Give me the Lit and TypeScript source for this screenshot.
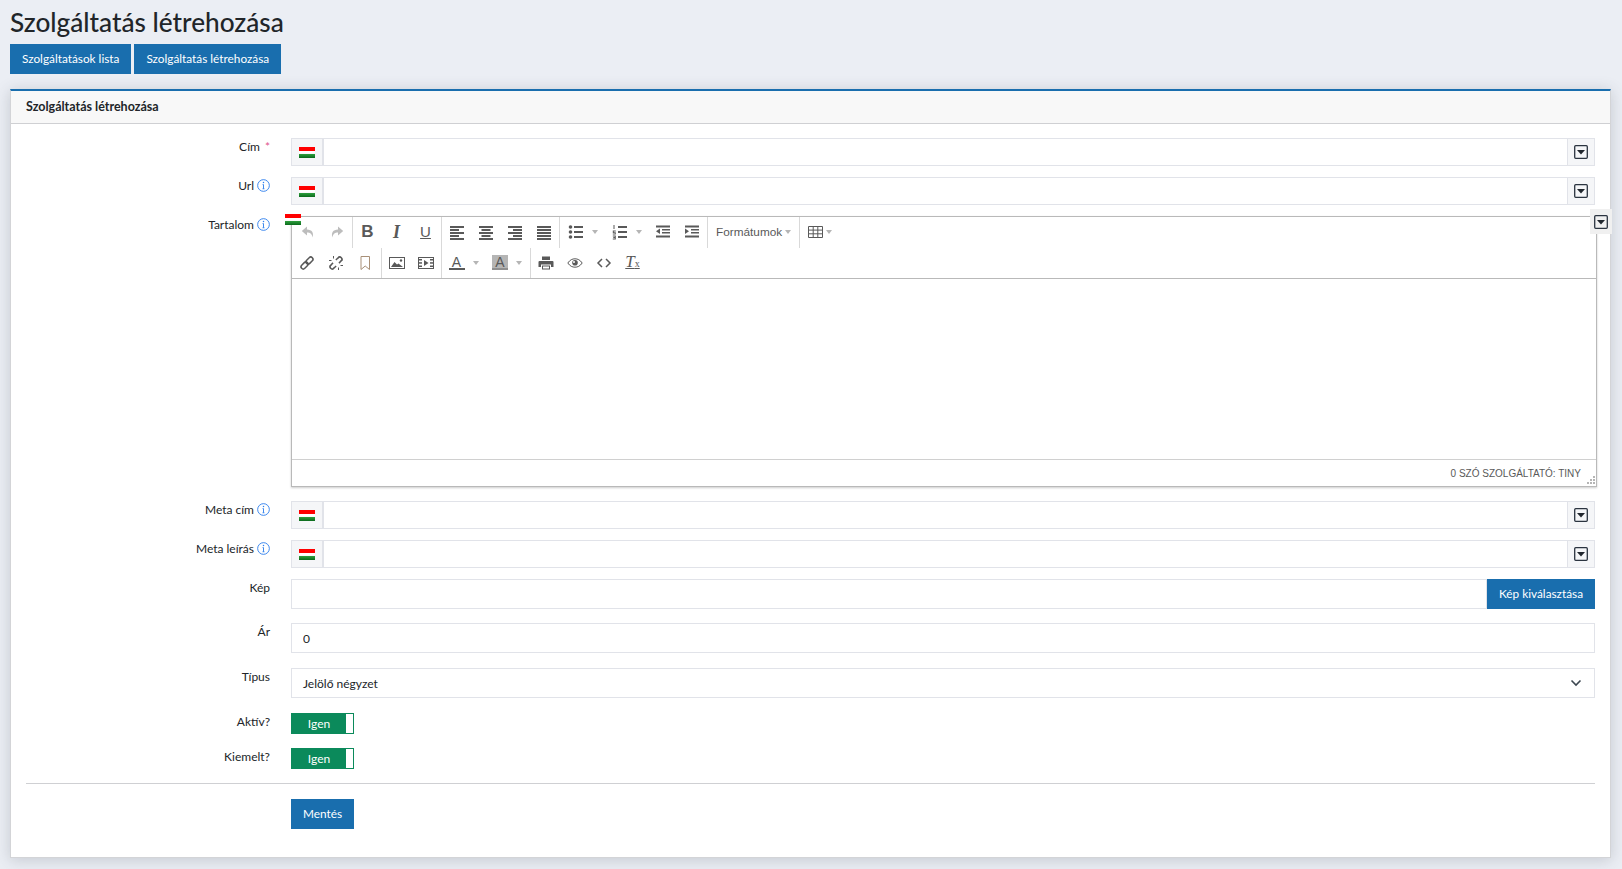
import { LitElement, css, html, svg } from 'lit'
import { customElement } from 'lit/decorators.js'

const bars = (rows: [number, number][]) =>
  rows.map(([x, w], i) => svg`<rect x=${x} y=${2 + i * 3} width=${w} height="2"></rect>`)

const icons: Record<string, unknown> = {
  undo: svg`<path class="off" d="M7 2.5 1.8 7 7 11.5V8.6c3 0 4.8 1 5.6 4.9C14 8.6 12 5.6 7 5.4Z"></path>`,
  redo: svg`<path class="off" d="M9 2.5 14.2 7 9 11.5V8.6c-3 0-4.8 1-5.6 4.9C2 8.6 4 5.6 9 5.4Z"></path>`,
  left: bars([[1, 14], [1, 9], [1, 14], [1, 9], [1, 14]]),
  center: bars([[1, 14], [3.5, 9], [1, 14], [3.5, 9], [1, 14]]),
  right: bars([[1, 14], [6, 9], [1, 14], [6, 9], [1, 14]]),
  justify: bars([[1, 14], [1, 14], [1, 14], [1, 14], [1, 14]]),
  bullist: svg`<circle cx="2.5" cy="3" r="1.8"></circle><circle cx="2.5" cy="8" r="1.8"></circle><circle cx="2.5" cy="13" r="1.8"></circle><rect x="6" y="2" width="9" height="2"></rect><rect x="6" y="7" width="9" height="2"></rect><rect x="6" y="12" width="9" height="2"></rect>`,
  numlist: svg`<rect x="1.5" y="1" width="1" height="4"></rect><path d="M.8 6.5h3v1h-2v.8h2v2.200h-3v-1h2v-.6h-2Z"></path><path d="M.8 11.500h3v4h-3v-1h2v-.5h-1.500v-1h1.500v-.5h-2Z"></path><rect x="6" y="2" width="9" height="2"></rect><rect x="6" y="7" width="9" height="2"></rect><rect x="6" y="12" width="9" height="2"></rect>`,
  outdent: svg`<rect x="1" y="1.500" width="14" height="2"></rect><rect x="7" y="5" width="8" height="1.500"></rect><rect x="7" y="8" width="8" height="1.500"></rect><rect x="1" y="11.500" width="14" height="2"></rect><path d="M5 4.500v5.500L1 7.300Z"></path>`,
  indent: svg`<rect x="1" y="1.500" width="14" height="2"></rect><rect x="7" y="5" width="8" height="1.500"></rect><rect x="7" y="8" width="8" height="1.500"></rect><rect x="1" y="11.500" width="14" height="2"></rect><path d="M1 4.500v5.500l4-2.700Z"></path>`,
  table: svg`<path class="line thin" d="M.5 2.500h14v11H.5ZM.5 6.100h14M.5 9.800h14M5.200 2.500v11M9.800 2.500v11"></path>`,
  link: svg`<g class="line" transform="rotate(-45 8 8)"><rect x="0.500" y="5.800" width="8" height="4.400" rx="2.200"></rect><rect x="7.500" y="5.800" width="8" height="4.400" rx="2.200"></rect></g>`,
  unlink: svg`<g class="line" transform="rotate(-45 8 8)"><path d="M6 5.800H2.700a2.200 2.200 0 0 0 0 4.400H6M10 5.800h3.300a2.200 2.200 0 0 1 0 4.400H10"></path></g><path class="line thin" d="M5.500 1v2.500M1 5.500h2.500M10.500 15v-2.500M15 10.500h-2.500M11 1.500l-.8 2M14.500 5l-2 .8M5 14.500l.8-2M1.500 11l2-.8"></path>`,
  bookmark: svg`<path class="line tan" d="M4 1.500h8.500v13L8.200 11 4 14.500Z"></path>`,
  image: svg`<rect class="line thin" x="0.500" y="2.500" width="15" height="11"></rect><path d="M2 12l3.500-5 2.500 2.500 1.500-1L14 12Z"></path><circle cx="12" cy="5.500" r="1.200"></circle>`,
  media: svg`<rect class="line thin" x="0.500" y="2.500" width="15" height="11"></rect><path d="M6 5v6l4.500-3Z"></path><rect x="1" y="4" width="3" height="1.500"></rect><rect x="1" y="7.200" width="3" height="1.500"></rect><rect x="1" y="10.500" width="3" height="1.500"></rect><rect x="12" y="4" width="3" height="1.500"></rect><rect x="12" y="7.200" width="3" height="1.500"></rect><rect x="12" y="10.500" width="3" height="1.500"></rect>`,
  print: svg`<path d="M4 1.500h8V5H4ZM1.500 6h13a1 1 0 0 1 1 1v5H13V9.500H3V12H.5V7a1 1 0 0 1 1-1ZM4 10.500h8v4H4Z"></path><rect x="5" y="11.500" width="6" height="2" fill="#fff"></rect>`,
  eye: svg`<path class="line thin" d="M.8 8C3 4.800 5.400 3.800 8 3.800S13 4.800 15.200 8C13 11.200 10.600 12.200 8 12.200S3 11.200.8 8Z"></path><circle cx="8" cy="7.800" r="2.800"></circle><circle cx="7" cy="7" r="1" fill="#fff"></circle>`,
  code: svg`<path class="line" d="M6 4 2 8l4 4M10 4l4 4-4 4"></path>`,
}

const tool = (name: string, split = false) => html`
  <span class="tool ${split ? 'split' : ''}">
    <svg class="ico" viewBox="0 0 16 16" width="16" height="16">${icons[name]}</svg>
    ${split ? html`<i class="caret"></i>` : ''}
  </span>
`

const letter = (text: string, cls: string) => html`<span class="tool"><span class="glyph ${cls}">${text}</span></span>`

const flag = (cls = '') => html`<span class="flag ${cls}"></span>`

const caretBox = html`
  <svg class="drop" viewBox="0 0 14 14" width="14" height="14">
    <rect x="0.700" y="0.700" width="12.600" height="12.600" rx="1"></rect>
    <path d="M3 5h8L7 9.500Z"></path>
  </svg>
`

const info = html`
  <svg class="info" viewBox="0 0 14 14" width="13" height="13">
    <circle cx="7" cy="7" r="6.300"></circle>
    <path d="M7 6v4.500M6 10.500h2M6 6h1"></path>
    <circle class="dot" cx="7" cy="3.800" r=".8"></circle>
  </svg>
`

@customElement('app-root')
export class AppRoot extends LitElement {
  private langInput() {
    return html`
      <div class="group">
        <span class="addon flag-addon">${flag()}</span>
        <input class="control" type="text" />
        <span class="addon drop-addon">${caretBox}</span>
      </div>
    `
  }

  private toolbar() {
    return html`
      <div class="toolbar">
        <div class="tool-row">
          <div class="tool-group">${tool('undo')}${tool('redo')}</div>
          <div class="tool-group">
            ${letter('B', 'bold')}${letter('I', 'italic')}${letter('U', 'under')}
          </div>
          <div class="tool-group">
            ${tool('left')}${tool('center')}${tool('right')}${tool('justify')}
          </div>
          <div class="tool-group">
            ${tool('bullist', true)}${tool('numlist', true)}${tool('outdent')}${tool('indent')}
          </div>
          <div class="tool-group formats"><span>Formátumok</span><i class="caret"></i></div>
          <div class="tool-group last"><span class="tool split narrow">
            <svg class="ico" viewBox="0 0 16 16" width="16" height="16">${icons.table}</svg><i class="caret"></i>
          </span></div>
        </div>
        <div class="tool-row second">
          <div class="tool-group">${tool('link')}${tool('unlink')}${tool('bookmark')}</div>
          <div class="tool-group">${tool('image')}${tool('media')}</div>
          <div class="tool-group">
            <span class="tool split tight"><span class="glyph color fore">A</span><i class="caret"></i></span>
            <span class="tool split tight"><span class="glyph color back">A</span><i class="caret"></i></span>
          </div>
          <div class="tool-group last">
            ${tool('print')}${tool('eye')}${tool('code')}
            <span class="tool"><span class="glyph clear">T<small>x</small></span></span>
          </div>
        </div>
      </div>
    `
  }

  render() {
    return html`
      <h1>Szolgáltatás létrehozása</h1>
      <nav>
        <a class="btn">Szolgáltatások lista</a>
        <a class="btn">Szolgáltatás létrehozása</a>
      </nav>
      <section class="card">
        <header>Szolgáltatás létrehozása</header>
        <form class="body">
          <div class="row">
            <label>Cím <b>*</b></label>
            ${this.langInput()}
          </div>
          <div class="row">
            <label>Url ${info}</label>
            ${this.langInput()}
          </div>
          <div class="row wide-gap">
            <label>Tartalom ${info}</label>
            <div class="editor-wrap">
              ${flag('over')}
              <span class="drop-over">${caretBox}</span>
              <div class="editor">
                ${this.toolbar()}
                <div class="edit-area"></div>
                <div class="status">
                  <span>0 szó Szolgáltató: Tiny</span>
                  <svg class="grip" viewBox="0 0 8 8" width="8" height="8">
                    <path d="M6 0h2v2H6ZM3 3h2v2H3ZM6 3h2v2H6ZM0 6h2v2H0ZM3 6h2v2H3ZM6 6h2v2H6Z"></path>
                  </svg>
                </div>
              </div>
            </div>
          </div>
          <div class="row">
            <label>Meta cím ${info}</label>
            ${this.langInput()}
          </div>
          <div class="row">
            <label>Meta leírás ${info}</label>
            ${this.langInput()}
          </div>
          <div class="row wide-gap">
            <label>Kép</label>
            <div class="group tall">
              <input class="control solo" type="text" />
              <a class="btn">Kép kiválasztása</a>
            </div>
          </div>
          <div class="row wider-gap">
            <label>Ár</label>
            <div class="group tall"><input class="control solo" type="text" value="0" /></div>
          </div>
          <div class="row wider-gap">
            <label>Típus</label>
            <div class="group tall select">
              <span>Jelölő négyzet</span>
              <svg viewBox="0 0 12 8" width="12" height="8"><path d="M1.500 1.500 6 6l4.500-4.500"></path></svg>
            </div>
          </div>
          <div class="row wide-gap">
            <label>Aktív?</label>
            <div class="toggle"><span>Igen</span><i></i></div>
          </div>
          <div class="row">
            <label>Kiemelt?</label>
            <div class="toggle"><span>Igen</span><i></i></div>
          </div>
          <hr />
          <div class="row">
            <span></span>
            <div><a class="btn">Mentés</a></div>
          </div>
        </form>
      </section>
    `
  }

  static styles = css`
    :host {
      display: block;
      height: 869px;
      overflow: hidden;
      box-sizing: border-box;
      padding: 0 11px 0 10px;
      background: #ebeef4;
      color: #212529;
      font-family: "Lato", sans-serif;
      font-size: 12px;
    }
    h1 {
      margin: 0;
      height: 44px;
      font-size: 26.200px;
      font-weight: 500;
      line-height: 44px;
    }
    nav {
      display: flex;
      gap: 3px;
      height: 45px;
    }
    .btn {
      display: inline-flex;
      align-items: center;
      height: 30px;
      box-sizing: border-box;
      padding: 0 12px 1px;
      background: #196eae;
      color: #fff;
      font-size: 11.800px;
      white-space: nowrap;
    }
    .card {
      height: 769px;
      box-sizing: border-box;
      background: #fff;
      border: 1px solid #d3d4d7;
      border-top: 2px solid #196eae;
      box-shadow: 0 2px 14px rgba(60, 70, 80, 0.22);
    }
    header {
      height: 33px;
      box-sizing: border-box;
      padding-left: 15px;
      line-height: 32px;
      font-size: 12.500px;
      font-weight: 700;
      background: #f8f8f8;
      border-bottom: 1px solid #cfd0d3;
    }
    .body {
      padding: 14px 15px 0;
    }
    .row {
      display: grid;
      grid-template-columns: 244px 1fr;
      column-gap: 21px;
      margin-bottom: 11px;
    }
    .row.wide-gap {
      margin-bottom: 14px;
    }
    .row.wider-gap {
      margin-bottom: 15px;
    }
    label {
      display: flex;
      justify-content: flex-end;
      align-items: center;
      gap: 3px;
      height: 16px;
      white-space: nowrap;
    }
    label b {
      margin-left: 2px;
      color: #e0558c;
      font-weight: 400;
    }
    .info {
      fill: none;
      stroke: #2f80ed;
      stroke-width: 1;
    }
    .info .dot {
      fill: #2f80ed;
      stroke: none;
    }
    .group {
      display: flex;
      height: 28px;
    }
    .group.tall {
      height: 30px;
    }
    .addon {
      display: flex;
      align-items: center;
      justify-content: center;
      box-sizing: border-box;
      background: #f5f6f8;
      border: 1px solid #e1e3e9;
    }
    .flag-addon {
      flex: 0 0 33px;
      border-right-width: 2px;
    }
    .drop-addon {
      flex: 0 0 28px;
      border-left: 1px solid #e1e3e9;
    }
    .control {
      flex: 1;
      min-width: 0;
      box-sizing: border-box;
      padding: 0 11px;
      border: 1px solid #e1e3e9;
      border-left: 0;
      border-right: 0;
      outline: none;
      color: inherit;
      font: inherit;
      background: #fff;
    }
    .control.solo {
      border-left: 1px solid #e1e3e9;
      border-right: 1px solid #e1e3e9;
    }
    .flag {
      display: block;
      width: 16px;
      height: 11px;
      background: linear-gradient(#f00 0 36%, #fff 36% 58%, #d8d8d8 66%, #2a9a3a 67%, #0b6a1c 100%);
    }
    .flag.over {
      position: absolute;
      top: -2px;
      left: -6px;
      z-index: 1;
    }
    .drop {
      fill: none;
      stroke: #2b3440;
      stroke-width: 1.300;
    }
    .drop path {
      fill: #20262d;
      stroke: none;
    }
    .drop-over {
      position: absolute;
      top: -7px;
      right: -15px;
      z-index: 1;
      display: flex;
      align-items: center;
      justify-content: center;
      width: 22px;
      height: 25px;
      background: #f0f0f0;
    }
    .editor-wrap {
      position: relative;
      margin-right: -2px;
    }
    .editor {
      border: 1px solid #b9b9b9;
      box-shadow: 0 1px 2px rgba(0, 0, 0, 0.2);
    }
    .toolbar {
      border-bottom: 1px solid #b9b9b9;
      height: 61px;
    }
    .tool-row {
      display: flex;
      height: 30.500px;
    }
    .tool-group {
      display: flex;
      align-items: center;
      box-sizing: border-box;
      padding: 0 1px 0 0;
      border-right: 1px solid #d9d9d9;
    }
    .tool-group:first-child {
      padding-left: 1px;
    }
    .second .tool-group:first-child {
      padding: 0 2px 0 0;
    }
    .tool-group.last {
      border-right: 0;
    }
    .tool {
      display: flex;
      align-items: center;
      justify-content: flex-start;
      width: 29px;
      height: 30px;
      padding-left: 6.500px;
      box-sizing: border-box;
      position: relative;
    }
    .tool.split {
      width: 44px;
      padding-left: 7.500px;
    }
    .tool.split.tight {
      width: 43.500px;
      padding-left: 6.500px;
    }
    .tool.split.narrow {
      width: 38px;
      padding-left: 7.500px;
    }
    .ico {
      display: block;
      flex: none;
      fill: #595959;
    }
    .ico .off {
      fill: #bdbdbd;
    }
    .ico .line {
      fill: none;
      stroke: #595959;
      stroke-width: 1.500;
    }
    .ico .line.thin {
      stroke-width: 1;
    }
    .ico .line.tan {
      stroke: #a89078;
      stroke-width: 1;
    }
    .caret {
      display: block;
      flex: none;
      width: 0;
      height: 0;
      border-left: 3.500px solid transparent;
      border-right: 3.500px solid transparent;
      border-top: 4px solid #b5b5b5;
    }
    .tool.split .caret {
      margin-left: 8px;
    }
    .tool.split.narrow .caret {
      margin-left: 2px;
    }
    .glyph {
      display: block;
      width: 16px;
      text-align: center;
      color: #595959;
      font-family: "Liberation Sans", sans-serif;
      font-size: 16px;
      line-height: 16px;
    }
    .glyph.bold {
      font-weight: 700;
      font-size: 17px;
    }
    .glyph.italic {
      font-style: italic;
      font-weight: 700;
      font-size: 18px;
      font-family: "Liberation Serif", serif;
    }
    .glyph.under {
      text-decoration: underline;
      font-size: 15px;
    }
    .glyph.color {
      font-size: 14px;
      height: 15px;
      box-sizing: border-box;
      border-bottom: 2px solid #595959;
      line-height: 14px;
    }
    .glyph.color.back {
      background: #b5b5b5;
      border-bottom-color: #8f8f8f;
    }
    .glyph.clear {
      font-family: "Liberation Serif", serif;
      font-style: italic;
      font-size: 17px;
      text-decoration: underline;
      text-decoration-thickness: 1px;
      white-space: nowrap;
    }
    .glyph.clear small {
      font-size: 10px;
      font-style: normal;
    }
    .formats {
      width: 92px;
      padding-left: 8px;
      gap: 3px;
      color: #595959;
      font-family: "Liberation Sans", sans-serif;
      font-size: 11.800px;
    }
    .edit-area {
      height: 180px;
    }
    .status {
      display: flex;
      align-items: center;
      justify-content: flex-end;
      gap: 6px;
      height: 27px;
      padding-right: 1px;
      border-top: 1px solid #d0d0d0;
      box-sizing: border-box;
      color: #595959;
      font-family: "Liberation Sans", sans-serif;
      font-size: 10px;
      text-transform: uppercase;
    }
    .grip {
      align-self: flex-end;
      margin-bottom: 2px;
      fill: #b5b5b5;
    }
    .select {
      box-sizing: border-box;
      align-items: center;
      justify-content: space-between;
      padding: 0 12px 0 11px;
      border: 1px solid #e1e3e9;
    }
    .select svg {
      fill: none;
      stroke: #3c4650;
      stroke-width: 1.600;
    }
    .toggle {
      display: flex;
      width: 63px;
      height: 21px;
      box-sizing: border-box;
      border: 1px solid #0b8a5b;
      background: #fff;
    }
    .toggle span {
      flex: 1;
      display: flex;
      align-items: center;
      justify-content: center;
      background: #0b8a5b;
      color: #fff;
    }
    .toggle i {
      flex: 0 0 7px;
    }
    hr {
      height: 1px;
      margin: 14px 0 15px;
      border: 0;
      background: #cfd0d3;
    }
  `
}
